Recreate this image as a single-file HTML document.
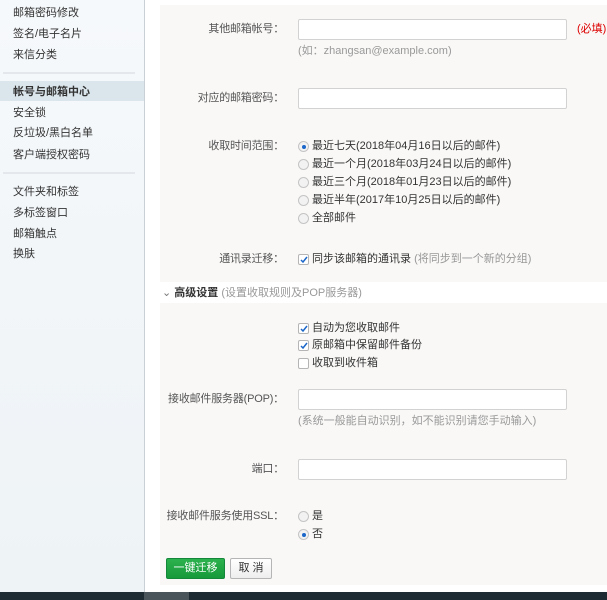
<!DOCTYPE html>
<html><head><meta charset="utf-8"><style>
body{margin:0;width:607px;height:600px;overflow:hidden;position:relative;background:#fff;font-family:"Liberation Sans","Noto Sans CJK SC",sans-serif;font-size:11px;color:#333}
.a{position:absolute;white-space:nowrap;line-height:14px}
#side{position:absolute;left:0;top:0;width:144px;height:592px;background:linear-gradient(#f6f9fb,#f1f5f8 60%,#eef3f6);border-right:1px solid #c9d0d6}
.si{position:absolute;left:13px;line-height:14px}
.sep{position:absolute;left:3px;width:132px;height:2px;background:#e4e8ec}
.p{position:absolute;left:160px;right:0;background:#f9f8f7}
.lb{position:absolute;right:323px;color:#555;line-height:14px;white-space:nowrap;letter-spacing:-0.2px}
.in{position:absolute;left:298px;width:267px;height:19px;background:#fff;border:1px solid #d2d2d2;border-radius:2px}
.r{position:absolute;left:298px;width:9px;height:9px;border:1px solid #c4c4c4;border-radius:50%;background:#f2f2f2}
.r.on::after{content:"";position:absolute;left:2.5px;top:2.5px;width:4px;height:4px;border-radius:50%;background:#1b66c9}
.c{position:absolute;left:298px;width:9px;height:9px;border:1px solid #b5b5b5;border-radius:2px;background:#fff}
.c svg{position:absolute;left:0;top:0}
.g{color:#999}
</style></head><body>
<div id="side">
<div class="si" style="top:6px">邮箱密码修改</div>
<div class="si" style="top:27px">签名/电子名片</div>
<div class="si" style="top:48px">来信分类</div>
<div class="sep" style="top:72px"></div>
<div style="position:absolute;left:0;top:81px;width:144px;height:20px;background:#dbe6ec"></div>
<div class="si" style="top:85px;font-weight:bold">帐号与邮箱中心</div>
<div class="si" style="top:106px">安全锁</div>
<div class="si" style="top:126px">反垃圾/黑白名单</div>
<div class="si" style="top:148px">客户端授权密码</div>
<div class="sep" style="top:172px"></div>
<div class="si" style="top:185px">文件夹和标签</div>
<div class="si" style="top:206px">多标签窗口</div>
<div class="si" style="top:227px">邮箱触点</div>
<div class="si" style="top:247px">换肤</div>
</div>
<div class="p" style="top:5px;height:277px"></div>
<div class="lb" style="top:22px">其他邮箱帐号：</div>
<div class="in" style="top:19px"></div>
<div class="a" style="left:577px;top:22px;color:#d00">(必填)</div>
<div class="a g" style="left:298px;top:44px">(如：zhangsan@example.com)</div>
<div class="lb" style="top:91px">对应的邮箱密码：</div>
<div class="in" style="top:88px"></div>
<div class="lb" style="top:139px">收取时间范围：</div>
<div class="r on" style="top:141px"></div><div class="a" style="left:312px;top:139px">最近七天(2018年04月16日以后的邮件)</div>
<div class="r" style="top:159px"></div><div class="a" style="left:312px;top:157px">最近一个月(2018年03月24日以后的邮件)</div>
<div class="r" style="top:177px"></div><div class="a" style="left:312px;top:175px">最近三个月(2018年01月23日以后的邮件)</div>
<div class="r" style="top:195px"></div><div class="a" style="left:312px;top:193px">最近半年(2017年10月25日以后的邮件)</div>
<div class="r" style="top:213px"></div><div class="a" style="left:312px;top:211px">全部邮件</div>
<div class="lb" style="top:252px">通讯录迁移：</div>
<div class="c" style="top:254px"><svg width="10" height="10"><path d="M2 5l2 2 4-5" stroke="#1b66c9" stroke-width="1.5" fill="none"/></svg></div>
<div class="a" style="left:312px;top:252px">同步该邮箱的通讯录 <span class="g">(将同步到一个新的分组)</span></div>
<div class="a" style="left:162px;top:286px"><span style="color:#777">⌄</span> <b>高级设置</b> <span class="g">(设置收取规则及POP服务器)</span></div>
<div class="p" style="top:303px;height:282px"></div>
<div class="c" style="top:323px"><svg width="10" height="10"><path d="M2 5l2 2 4-5" stroke="#1b66c9" stroke-width="1.5" fill="none"/></svg></div>
<div class="a" style="left:312px;top:321px">自动为您收取邮件</div>
<div class="c" style="top:340px"><svg width="10" height="10"><path d="M2 5l2 2 4-5" stroke="#1b66c9" stroke-width="1.5" fill="none"/></svg></div>
<div class="a" style="left:312px;top:338px">原邮箱中保留邮件备份</div>
<div class="c" style="top:358px"></div>
<div class="a" style="left:312px;top:356px">收取到收件箱</div>
<div class="lb" style="top:392px">接收邮件服务器(POP)：</div>
<div class="in" style="top:389px"></div>
<div class="a g" style="left:298px;top:414px">(系统一般能自动识别，如不能识别请您手动输入)</div>
<div class="lb" style="top:462px">端口：</div>
<div class="in" style="top:459px"></div>
<div class="lb" style="top:509px">接收邮件服务使用SSL：</div>
<div class="r" style="top:511px"></div><div class="a" style="left:312px;top:509px">是</div>
<div class="r on" style="top:529px"></div><div class="a" style="left:312px;top:527px">否</div>
<div style="position:absolute;left:166px;top:558px;width:57px;height:19px;background:linear-gradient(#2cb24e,#16993a);border:1px solid #14873a;border-radius:2px;color:#fff;text-align:center;line-height:19px">一键迁移</div>
<div style="position:absolute;left:230px;top:558px;width:40px;height:19px;background:linear-gradient(#fff,#eee);border:1px solid #b5b5b5;border-radius:2px;text-align:center;line-height:19px">取 消</div>
<div style="position:absolute;left:0;top:592px;width:607px;height:8px;background:#1f2b33"></div>
<div style="position:absolute;left:144px;top:592px;width:45px;height:8px;background:#4a545b"></div>
</body></html>
